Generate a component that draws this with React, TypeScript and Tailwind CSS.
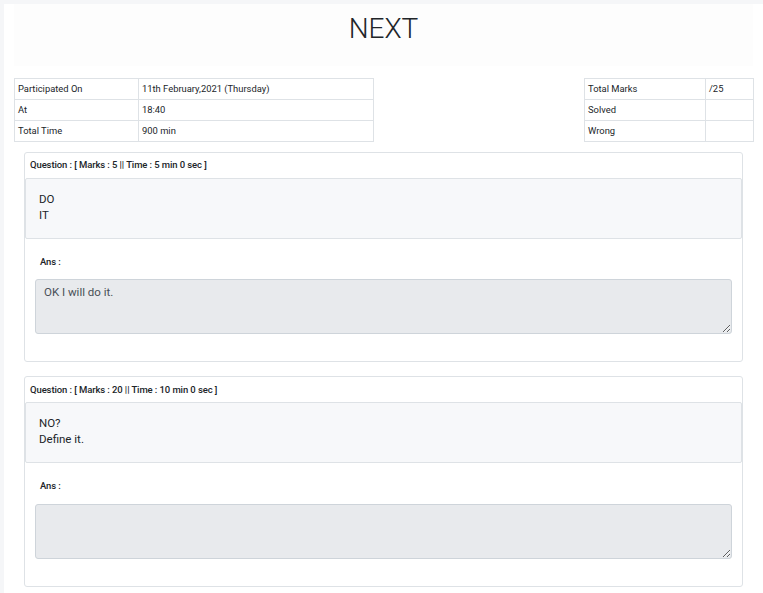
import React from 'react';

const font = { fontFamily: 'Roboto, "Liberation Sans", sans-serif' };

const info = [
  ['Participated On', '11th February,2021 (Thursday)'],
  ['At', '18:40'],
  ['Total Time', '900 min'],
];

const score = [
  ['Total Marks', '/25'],
  ['Solved', ''],
  ['Wrong', ''],
];

const questions = [
  { marks: 5, time: '5 min 0 sec', lines: ['DO', 'IT'], ans: 'OK I will do it.' },
  { marks: 20, time: '10 min 0 sec', lines: ['NO?', 'Define it.'], ans: '' },
];

function InfoTable({ rows, widths }: { rows: string[][]; widths: string[] }) {
  return (
    <table className="border-collapse text-[9.4px] text-[#212529]">
      <tbody>
        {rows.map(([k, v]) => (
          <tr key={k} className="h-[21px]">
            <td className={`border border-[#dee2e6] px-[3px] ${widths[0]}`}>{k}</td>
            <td className={`border border-[#dee2e6] px-[3px] ${widths[1]}`}>{v}</td>
          </tr>
        ))}
      </tbody>
    </table>
  );
}

function QuestionCard({ q }: { q: (typeof questions)[number] }) {
  return (
    <div className="rounded-[3px] border border-[#dee2e6] bg-white">
      <div className="flex h-[25px] items-center px-[5px] text-[9.5px] font-medium tracking-[-0.1px] text-[#212529]">
        Question : [ Marks : {q.marks} || Time : {q.time} ]
      </div>
      <div className="h-[61px] rounded-[2px] border border-[#dee2e6] bg-[#f7f8fa] px-[13px] pt-[12px] text-[11.5px] leading-[16px] text-[#212529]">
        {q.lines.map((l) => (
          <div key={l}>{l}</div>
        ))}
      </div>
      <div className="px-[10px] pb-[27px]">
        <div className="pl-[5px] pt-[16px] pb-[10px] text-[9.5px] font-medium tracking-[-0.1px] text-[#212529]">Ans :</div>
        <textarea
          readOnly
          value={q.ans}
          className="block h-[55px] w-full resize-y rounded-[3px] border border-[#ced4da] bg-[#e8eaed] px-[8px] py-[4px] text-[11.5px] leading-[16px] text-[#495057] outline-none"
          style={font}
        />
      </div>
    </div>
  );
}

export default function App() {
  return (
    <div className="min-h-[593px] bg-[#f5f6f8] pl-[4px] pt-[4px]" style={font}>
      <div className="min-h-[589px] bg-white px-[10px]">
        <div className="flex h-[62px] w-[739px] items-start justify-center bg-[#fdfdfd] pt-[4px] text-[28px] font-light text-[#212529]">
          NEXT
        </div>
        <div className="mt-[12px] flex w-[740px] justify-between">
          <InfoTable rows={info} widths={['w-[124px]', 'w-[235px]']} />
          <InfoTable rows={score} widths={['w-[121px]', 'w-[48px]']} />
        </div>
        <div className="mt-[10px] flex w-[739px] flex-col gap-[14px] px-[10px]">
          {questions.map((q) => (
            <QuestionCard key={q.marks} q={q} />
          ))}
        </div>
      </div>
    </div>
  );
}
